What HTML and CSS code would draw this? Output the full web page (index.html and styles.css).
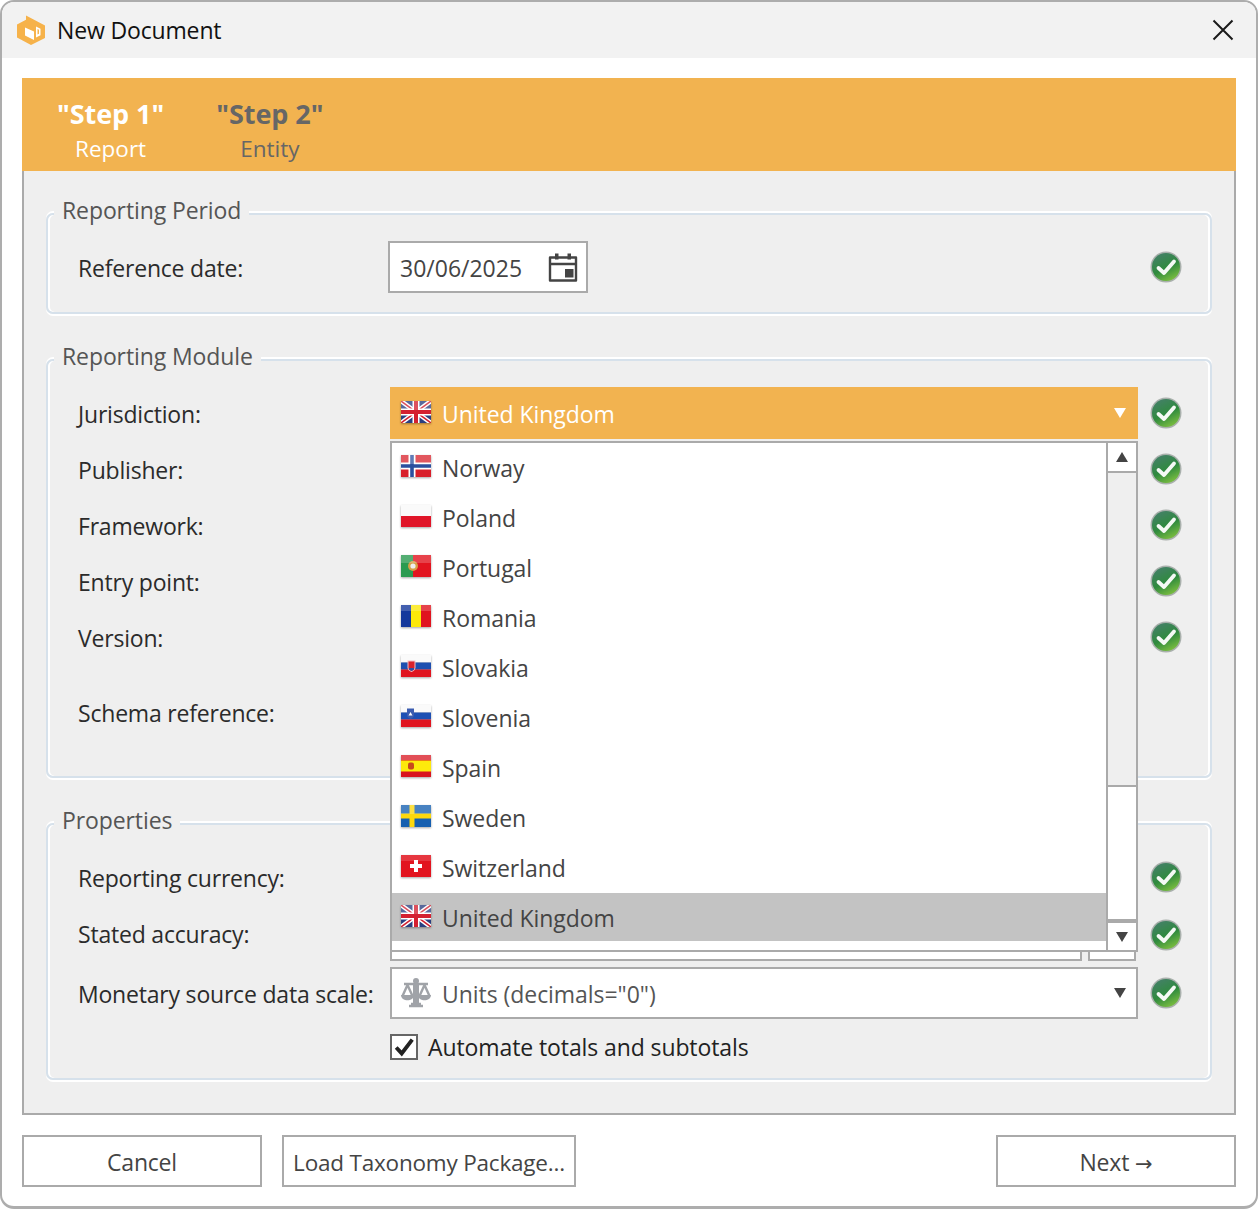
FILE: index.html
```html
<!DOCTYPE html>
<html lang="en">
<head>
<meta charset="utf-8">
<title>New Document</title>
<link rel="stylesheet" href="styles.css">
</head>
<body>
<svg class="defs" aria-hidden="true">
  <defs>
    <linearGradient id="okFill" x1="0.2" y1="0" x2="0.7" y2="1">
      <stop offset="0" stop-color="#45806a"/><stop offset="0.55" stop-color="#2f8a3e"/><stop offset="1" stop-color="#7ec040"/>
    </linearGradient>
    <symbol id="ok" viewBox="0 0 32 32">
      <circle cx="16" cy="16" r="15.500" fill="#a9b0ac"/>
      <circle cx="16" cy="16" r="14" fill="url(#okFill)"/>
      <path d="M8.500 17l5.500 5 10-11.500" fill="none" stroke="#fff" stroke-width="3.800" stroke-linecap="round" stroke-linejoin="round" opacity=".95"/>
    </symbol>
    <symbol id="caret" viewBox="0 0 12 10"><path d="M0 0h12L6 10z"/></symbol>
    <symbol id="f-uk" viewBox="0 0 30 22">
      <rect width="30" height="22" fill="#2a3f80"/>
      <path d="M0 0l30 22M30 0L0 22" stroke="#fff" stroke-width="4.500"/>
      <path d="M0 0l30 22M30 0L0 22" stroke="#d02030" stroke-width="1.500"/>
      <path d="M15 0v22M0 11h30" stroke="#fff" stroke-width="7"/>
      <path d="M15 0v22M0 11h30" stroke="#d42030" stroke-width="4"/>
      <rect width="30" height="9" fill="#fff" opacity=".22"/>
    </symbol>
    <symbol id="f-no" viewBox="0 0 30 22">
      <rect width="30" height="22" fill="#d81f2a"/>
      <path d="M11 0v22M0 11h30" stroke="#fff" stroke-width="7"/>
      <path d="M11 0v22M0 11h30" stroke="#2b4f9e" stroke-width="3.600"/>
      <rect width="30" height="9" fill="#fff" opacity=".25"/>
    </symbol>
    <symbol id="f-pl" viewBox="0 0 30 22">
      <rect width="30" height="11" fill="#fafafa"/><rect y="11" width="30" height="11" fill="#e01528"/>
    </symbol>
    <symbol id="f-pt" viewBox="0 0 30 22">
      <rect width="30" height="22" fill="#e2141f"/><rect width="12" height="22" fill="#2a9a50"/>
      <circle cx="12" cy="11" r="5" fill="#d6a048"/><circle cx="12" cy="11" r="2.600" fill="#eee"/>
      <rect width="30" height="8" fill="#fff" opacity=".2"/>
    </symbol>
    <symbol id="f-ro" viewBox="0 0 30 22">
      <rect width="10" height="22" fill="#14389c"/><rect x="10" width="10" height="22" fill="#fce80a"/><rect x="20" width="10" height="22" fill="#e0141f"/>
      <rect width="30" height="6" fill="#fff" opacity=".2"/>
    </symbol>
    <symbol id="f-sk" viewBox="0 0 30 22">
      <rect width="30" height="7.500" fill="#fafafa"/><rect y="7.500" width="30" height="7" fill="#1d4fb0"/><rect y="14.500" width="30" height="7.500" fill="#e0141f"/>
      <path d="M6.500 5.500h8v7c0 2.500-1.800 3.500-4 4.500-2.200-1-4-2-4-4.500z" fill="#f4c0c4"/><path d="M7.500 6.500h6v6c0 2-1.300 2.800-3 3.500-1.700-.7-3-1.500-3-3.500z" fill="#d8222c"/><path d="M8 13h5v1.500l-2.500 1.500L8 14.500z" fill="#2a4fa8"/>
    </symbol>
    <symbol id="f-si" viewBox="0 0 30 22">
      <rect width="30" height="7.500" fill="#fafafa"/><rect y="7.500" width="30" height="7" fill="#1d50b4"/><rect y="14.500" width="30" height="7.500" fill="#e0141f"/>
      <path d="M6 3.500h7v6.500c0 2.500-1.500 3-3.500 4C7.500 13 6 12.500 6 10z" fill="#3b5cb0"/><path d="M7.500 10.500l2-3.500 2 3.500z" fill="#fff"/>
    </symbol>
    <symbol id="f-es" viewBox="0 0 30 22">
      <rect width="30" height="22" fill="#d9141f"/><rect y="5.500" width="30" height="11" fill="#fdea0c"/>
      <rect x="7" y="7.500" width="6" height="7" rx="2" fill="#c8481c"/>
      <rect width="30" height="5" fill="#fff" opacity=".25"/>
    </symbol>
    <symbol id="f-se" viewBox="0 0 30 22">
      <rect width="30" height="22" fill="#155fb0"/>
      <path d="M11 0v22M0 11h30" stroke="#fdd80c" stroke-width="5"/>
      <rect width="30" height="9" fill="#fff" opacity=".22"/>
    </symbol>
    <symbol id="f-ch" viewBox="0 0 30 22">
      <rect width="30" height="22" fill="#e2141f"/>
      <path d="M15 5v12M9 11h12" stroke="#fff" stroke-width="4"/>
      <rect width="30" height="6" fill="#fff" opacity=".15"/>
    </symbol>
  </defs>
</svg>

<div class="window">
  <header class="titlebar">
    <svg class="logo" viewBox="0 0 28 30" aria-hidden="true">
      <path d="M0 9.500L9 4.700V.5L28 10.500V23L14 30 0 22.500z" fill="#f6b24a"/>
      <path d="M8 12.500l9 4V25l-9-4.500z" fill="#fff"/>
      <path d="M19 11.500l4.500 2.200v6.500L19 22.500z" fill="#fff"/>
      <path d="M20.500 14l1.500.8v4l-1.500.8z" fill="#f6b24a"/>
    </svg>
    <span class="title">New Document</span>
    <svg class="close" viewBox="0 0 22 22" aria-hidden="true"><path d="M1.500 1.500l19 19M20.500 1.500l-19 19"/></svg>
  </header>

  <section class="panel">
    <div class="steps">
      <div class="step step-on"><strong>"Step 1"</strong><span>Report</span></div>
      <div class="step"><strong>"Step 2"</strong><span>Entity</span></div>
    </div>

    <div class="panel-body">
      <div class="group group-period">
        <span class="legend">Reporting Period</span>
        <div class="row">
          <span class="label">Reference date:</span>
          <div class="date">
            <span class="date-text">30/06/2025</span>
            <svg class="cal" viewBox="0 0 30 32" aria-hidden="true">
              <path d="M2 6.500h26v23H2zM2 13h26" fill="none" stroke="#444" stroke-width="2.400" stroke-linejoin="round"/>
              <path d="M7 2.500h3.500v6H7zM19.500 2.500H23v6h-3.500z" fill="#444"/>
              <rect x="17" y="18" width="8.500" height="8.500" fill="#444"/>
            </svg>
          </div>
          <svg class="ok"><use href="#ok"/></svg>
        </div>
      </div>

      <div class="group group-module">
        <span class="legend">Reporting Module</span>
        <div class="row">
          <span class="label">Jurisdiction:</span>
          <div class="combo-wrap">
            <div class="combo combo-open">
              <svg class="flag"><use href="#f-uk"/></svg>
              <span class="combo-text">United Kingdom</span>
              <svg class="caret"><use href="#caret"/></svg>
            </div>
            <div class="popup">
              <ul class="list">
                <li class="item"><svg class="flag"><use href="#f-no"/></svg>Norway</li>
                <li class="item"><svg class="flag"><use href="#f-pl"/></svg>Poland</li>
                <li class="item"><svg class="flag"><use href="#f-pt"/></svg>Portugal</li>
                <li class="item"><svg class="flag"><use href="#f-ro"/></svg>Romania</li>
                <li class="item"><svg class="flag"><use href="#f-sk"/></svg>Slovakia</li>
                <li class="item"><svg class="flag"><use href="#f-si"/></svg>Slovenia</li>
                <li class="item"><svg class="flag"><use href="#f-es"/></svg>Spain</li>
                <li class="item"><svg class="flag"><use href="#f-se"/></svg>Sweden</li>
                <li class="item"><svg class="flag"><use href="#f-ch"/></svg>Switzerland</li>
                <li class="item item-sel"><svg class="flag"><use href="#f-uk"/></svg>United Kingdom</li>
              </ul>
              <div class="scrollbar">
                <div class="sb-up"><svg class="sb-arrow"><use href="#caret"/></svg></div>
                <div class="sb-track"></div>
                <div class="sb-thumb"></div>
                <div class="sb-down"><svg class="sb-arrow"><use href="#caret"/></svg></div>
              </div>
            </div>
          </div>
          <svg class="ok"><use href="#ok"/></svg>
        </div>
        <div class="row"><span class="label">Publisher:</span><div class="combo"></div><svg class="ok"><use href="#ok"/></svg></div>
        <div class="row"><span class="label">Framework:</span><div class="combo"></div><svg class="ok"><use href="#ok"/></svg></div>
        <div class="row"><span class="label">Entry point:</span><div class="combo"></div><svg class="ok"><use href="#ok"/></svg></div>
        <div class="row"><span class="label">Version:</span><div class="combo"></div><svg class="ok"><use href="#ok"/></svg></div>
        <div class="row row-tall"><span class="label label-up">Schema reference:</span><div class="combo combo-tall"></div></div>
      </div>

      <div class="group group-props">
        <span class="legend">Properties</span>
        <div class="row"><span class="label">Reporting currency:</span><div class="combo"></div><svg class="ok"><use href="#ok"/></svg></div>
        <div class="row">
          <span class="label label-up">Stated accuracy:</span>
          <div class="split"><div class="combo"></div><div class="combo"></div></div>
          <svg class="ok"><use href="#ok"/></svg>
        </div>
        <div class="row">
          <span class="label">Monetary source data scale:</span>
          <div class="combo">
            <svg class="scale" viewBox="0 0 32 32" aria-hidden="true">
              <g fill="none" stroke="#a0a3a8" stroke-width="2.400">
                <path d="M16 3v24M4 7h24M9 29h14M11 27h10"/>
                <path d="M7.500 8L2.500 19M7.500 8l5 11M24.500 8l-5 11M24.500 8l5 11"/>
              </g>
              <path d="M1 18h13c0 7-13 7-13 0zM18 18h13c0 7-13 7-13 0z" fill="#a0a3a8"/>
              <path d="M13 6h6v20h-6z" fill="#a0a3a8"/>
              <circle cx="16" cy="4" r="3" fill="#a0a3a8"/>
            </svg>
            <span class="combo-text combo-dim">Units (decimals="0")</span>
            <svg class="caret caret-dark"><use href="#caret"/></svg>
          </div>
          <svg class="ok"><use href="#ok"/></svg>
        </div>
        <div class="row row-check">
          <label class="check">
            <span class="box"><svg viewBox="0 0 24 24" aria-hidden="true"><path d="M3.500 12.500l6 6.500L21 4"/></svg></span>
            Automate totals and subtotals
          </label>
        </div>
      </div>
    </div>
  </section>

  <footer class="actions">
    <button class="btn btn-cancel" type="button">Cancel</button>
    <button class="btn btn-load" type="button">Load Taxonomy Package...</button>
    <button class="btn btn-next" type="button">Next <span class="arrow">→</span></button>
  </footer>
</div>
</body>
</html>
```

FILE: styles.css
```css
* { box-sizing: border-box; }
html, body { margin: 0; padding: 0; background: #fff; }
body { font-family: "Open Sans", "Noto Sans", "Liberation Sans", sans-serif; font-size: 24px; color: #222; }
.defs { position: absolute; width: 0; height: 0; }

.window {
  height: 1209px;
  display: flex;
  flex-direction: column;
  background: #fff;
  border: 2px solid #adadad;
  border-bottom-width: 3px;
  border-radius: 14px;
  overflow: hidden;
}

.titlebar { height: 56px; flex: none; background: #f2f2f2; display: flex; align-items: center; padding: 0 22px 0 15px; }
.logo { width: 28px; height: 30px; flex: none; margin-right: 12px; }
.title { font-size: 23px; color: #111; letter-spacing: -0.15px; }
.close { width: 22px; height: 22px; margin-left: auto; fill: none; stroke: #1a1a1a; stroke-width: 2; }

.panel { margin: 20px 20px 0; border: 2px solid #aaa; border-top: 0; flex: none; background: #efefef; }
.steps { height: 93px; margin: 0 -2px; background: #f2b350; display: flex; gap: 52px; padding: 17px 0 0 35px; }
.step { display: flex; flex-direction: column; align-items: center; color: #666; }
.step strong { font-size: 27px; line-height: 38px; font-weight: 700; letter-spacing: -0.05px; }
.step span { font-size: 22.5px; line-height: 32px; }
.step-on { color: #fff; }

.panel-body { padding: 42px 22px 33px; display: flex; flex-direction: column; gap: 45px; }
.group {
  position: relative;
  border: 2px solid #d6e1eb;
  border-radius: 7px;
  box-shadow: inset 2px 0 0 #fff, inset -2px 0 0 #fff, 0 -2px 0 #fff, 0 2px 0 #fff;
  padding: 0 28px 0 30px;
  display: flex;
  flex-direction: column;
}
.legend { position: absolute; top: -21px; left: 6px; padding: 0 8px; background: #efefef; color: #555; font-size: 23px; line-height: 32px; letter-spacing: -0.1px; }
.group-period { padding-top: 26px; padding-bottom: 19px; }
.group-module { padding-top: 26px; padding-bottom: 15px; gap: 4px; }
.group-props { padding-top: 26px; padding-bottom: 17px; gap: 6px; }

.row { display: grid; grid-template-columns: 312px 748px 44px; height: 52px; align-items: center; }
.row > .ok { margin-left: 12px; }
.row-tall { height: 94px; }
.row-check { height: 28px; margin-top: 8px; display: flex; padding-left: 312px; }
.label { color: #2b2b2b; font-size: 23px; letter-spacing: -0.2px; position: relative; top: 1px; white-space: nowrap; }
.label-up { top: -1px; }
.ok { width: 32px; height: 32px; filter: blur(0.35px); }

.date { width: 200px; height: 52px; margin-left: -2px; background: #fff; border: 2px solid #aaa; display: flex; align-items: center; justify-content: space-between; padding: 0 8px 0 10px; color: #444; font-size: 23px; }
.date-text { position: relative; top: 1px; }
.cal { width: 30px; height: 32px; flex: none; }

.combo-wrap { position: relative; height: 52px; }
.combo { height: 52px; background: #fff; border: 2px solid #aaa; display: flex; align-items: center; padding-left: 9px; }
.combo-tall { height: 94px; }
.combo-open { background: #f2b350; border-color: #f2b350; color: #fff; }
.combo-text { font-size: 23px; margin-left: 11px; position: relative; top: 1px; letter-spacing: -0.05px; }
.combo-dim { color: #555; margin-left: 10px; }
.flag { width: 30px; height: 22px; flex: none; margin-bottom: 2px; filter: blur(0.5px) drop-shadow(0 1px 1px rgba(0,0,0,.35)); }
.caret { width: 12px; height: 10px; margin-left: auto; margin-right: 10px; fill: #fff; }
.caret-dark { fill: #444; }
.scale { width: 32px; height: 32px; flex: none; margin-left: -1px; filter: blur(0.4px); }
.split { display: grid; grid-template-columns: 692px 48px; gap: 6px; }

.popup { position: absolute; top: 54px; left: 0; width: 748px; height: 511px; background: #fff; border: 2px solid #aaa; display: flex; z-index: 2; }
.list { flex: 1; margin: 0; padding: 0; list-style: none; }
.item { height: 48px; margin-bottom: 2px; padding-top: 2px; display: flex; align-items: center; gap: 11px; padding-left: 9px; color: #444; font-size: 23px; letter-spacing: -0.05px; }
.item .flag { margin-bottom: 4px; }
.item-sel { background: #c3c3c3; }
.scrollbar { width: 30px; border-left: 2px solid #aaa; display: flex; flex-direction: column; }
.sb-up { height: 30px; border-bottom: 2px solid #aaa; display: flex; align-items: center; justify-content: center; }
.sb-up .sb-arrow { transform: rotate(180deg); }
.sb-track { height: 312px; background: #efefef; }
.sb-thumb { height: 136px; border-top: 2px solid #aaa; border-bottom: 2px solid #aaa; background: #fff; }
.sb-down { flex: 1; border-top: 2px solid #aaa; display: flex; align-items: center; justify-content: center; }
.sb-arrow { width: 12px; height: 10px; fill: #444; }

.check { display: flex; align-items: center; gap: 10px; color: #222; font-size: 23px; letter-spacing: -0.1px; white-space: nowrap; }
.box { width: 28px; height: 26px; border: 2px solid #666; background: #fff; display: flex; align-items: center; justify-content: center; }
.box svg { width: 22px; height: 22px; fill: none; stroke: #222; stroke-width: 4.2; }

.actions { margin: 20px 20px 0; display: flex; gap: 20px; }
.btn { height: 52px; background: #fff; border: 2px solid #aaa; font: inherit; font-size: 23px; letter-spacing: -0.2px; color: #444; padding: 2px 0 0; }
.arrow { font-family: "DejaVu Sans", sans-serif; font-size: 21px; letter-spacing: 0; }
.btn-cancel { width: 240px; }
.btn-load { width: 294px; font-size: 22.5px; }
.btn-next { width: 240px; margin-left: auto; }
```
